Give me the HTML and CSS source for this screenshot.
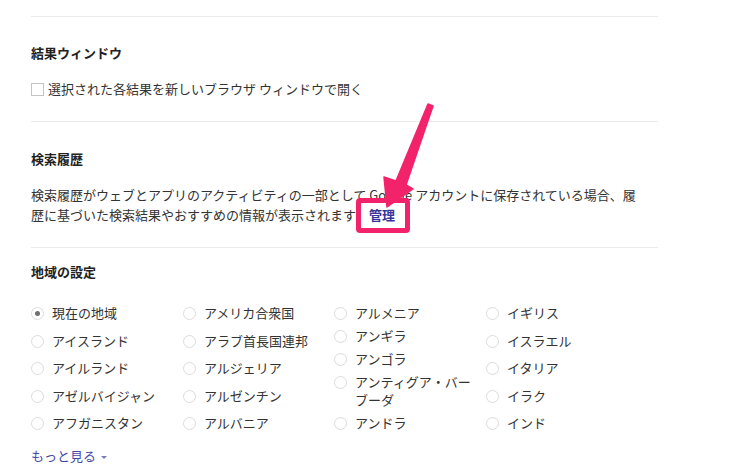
FILE: index.html
```html
<!DOCTYPE html>
<html lang="ja">
<head>
<meta charset="utf-8">
<link rel="stylesheet" href="styles.css">
</head>
<body>
<div class="page">
  <section class="sec sec-window">
    <h2 class="title">結果ウィンドウ</h2>
    <label class="check"><span class="box"></span>選択された各結果を新しいブラウザ ウィンドウで開く</label>
  </section>
  <section class="sec sec-history">
    <h2 class="title">検索履歴</h2>
    <p class="desc">検索履歴がウェブとアプリのアクティビティの一部として Google アカウントに保存されている場合、履歴に基づいた検索結果やおすすめの情報が表示されます<a class="manage">管理</a></p>
  </section>
  <section class="sec sec-region">
    <h2 class="title">地域の設定</h2>
    <div class="grid">
      <div class="col">
        <div class="opt"><span class="radio on"></span><span class="lbl">現在の地域</span></div>
        <div class="opt"><span class="radio"></span><span class="lbl">アイスランド</span></div>
        <div class="opt"><span class="radio"></span><span class="lbl">アイルランド</span></div>
        <div class="opt"><span class="radio"></span><span class="lbl">アゼルバイジャン</span></div>
        <div class="opt"><span class="radio"></span><span class="lbl">アフガニスタン</span></div>
      </div>
      <div class="col">
        <div class="opt"><span class="radio"></span><span class="lbl">アメリカ合衆国</span></div>
        <div class="opt"><span class="radio"></span><span class="lbl">アラブ首長国連邦</span></div>
        <div class="opt"><span class="radio"></span><span class="lbl">アルジェリア</span></div>
        <div class="opt"><span class="radio"></span><span class="lbl">アルゼンチン</span></div>
        <div class="opt"><span class="radio"></span><span class="lbl">アルバニア</span></div>
      </div>
      <div class="col">
        <div class="opt"><span class="radio"></span><span class="lbl">アルメニア</span></div>
        <div class="opt"><span class="radio"></span><span class="lbl">アンギラ</span></div>
        <div class="opt"><span class="radio"></span><span class="lbl">アンゴラ</span></div>
        <div class="opt"><span class="radio"></span><span class="lbl">アンティグア・バーブーダ</span></div>
        <div class="opt"><span class="radio"></span><span class="lbl">アンドラ</span></div>
      </div>
      <div class="col">
        <div class="opt"><span class="radio"></span><span class="lbl">イギリス</span></div>
        <div class="opt"><span class="radio"></span><span class="lbl">イスラエル</span></div>
        <div class="opt"><span class="radio"></span><span class="lbl">イタリア</span></div>
        <div class="opt"><span class="radio"></span><span class="lbl">イラク</span></div>
        <div class="opt"><span class="radio"></span><span class="lbl">インド</span></div>
      </div>
    </div>
    <a class="more">もっと見る<span class="caret"></span></a>
  </section>
</div>
<svg class="arrow" width="730" height="471" viewBox="0 0 730 471">
  <polygon points="428,104 433,106 406,185 413,189 387,207 384,177 396,181" fill="#f2236a" stroke="#f2236a" stroke-width="1.5" stroke-linejoin="round"/>
</svg>
</body>
</html>
```

FILE: styles.css
```css
html, body {
  margin: 0;
  padding: 0;
  background: #fff;
}
body {
  font-family: "Noto Sans CJK JP", "Liberation Sans", sans-serif;
  font-size: 13px;
  color: #333;
  position: relative;
  width: 730px;
  height: 471px;
  overflow: hidden;
}
.page {
  padding: 16px 0 0 31px;
  width: 627px;
}
.sec {
  border-top: 1px solid #ebebeb;
}
.title {
  margin: 0;
  font-size: 13px;
  font-weight: bold;
  line-height: 20px;
  color: #222;
}
.sec-window {
  padding: 26px 0 22px;
}
.sec-window .title {
  margin-bottom: 16px;
}
.check {
  display: flex;
  align-items: center;
  line-height: 20px;
}
.box {
  width: 11px;
  height: 11px;
  border: 1px solid #c4c4c4;
  margin-right: 4px;
  background: #fff;
}
.sec-history {
  padding: 27px 0 22px;
}
.sec-history .title {
  margin-bottom: 16px;
}
.desc {
  margin: 0;
  line-height: 20px;
  width: 616px;
}
.manage {
  display: inline-block;
  position: relative;
  margin-left: 13px;
  color: #35359a;
  font-weight: bold;
}
.manage::before {
  content: "";
  position: absolute;
  left: -13px;
  right: -15px;
  top: -7px;
  bottom: -8px;
  border: 5px solid #f2236a;
  border-radius: 4px;
}
.sec-region {
  padding: 14px 0 0;
}
.grid {
  margin-top: 22px;
  display: grid;
  grid-template-columns: 152px 151px 152px 140px;
}
.col {
  display: flex;
  flex-direction: column;
  justify-content: space-between;
  gap: 5px;
}
.opt {
  display: flex;
  align-items: flex-start;
  line-height: 18px;
}
.radio {
  flex: none;
  width: 11px;
  height: 11px;
  border: 1px solid #dcdcdc;
  border-radius: 50%;
  margin: 3px 8px 0 0;
  position: relative;
  background: #fff;
}
.radio.on::after {
  content: "";
  position: absolute;
  left: 3px;
  top: 3px;
  width: 5px;
  height: 5px;
  border-radius: 50%;
  background: #707070;
}
.lbl {
  max-width: 124px;
}
.more {
  display: inline-flex;
  align-items: center;
  margin-top: 14px;
  line-height: 20px;
  color: #4646a6;
}
.caret {
  width: 0;
  height: 0;
  border-left: 3px solid transparent;
  border-right: 3px solid transparent;
  border-top: 3px solid #7a7ab8;
  margin-left: 5px;
  margin-top: 2px;
}
.arrow {
  position: absolute;
  left: 0;
  top: 0;
  pointer-events: none;
}
```
